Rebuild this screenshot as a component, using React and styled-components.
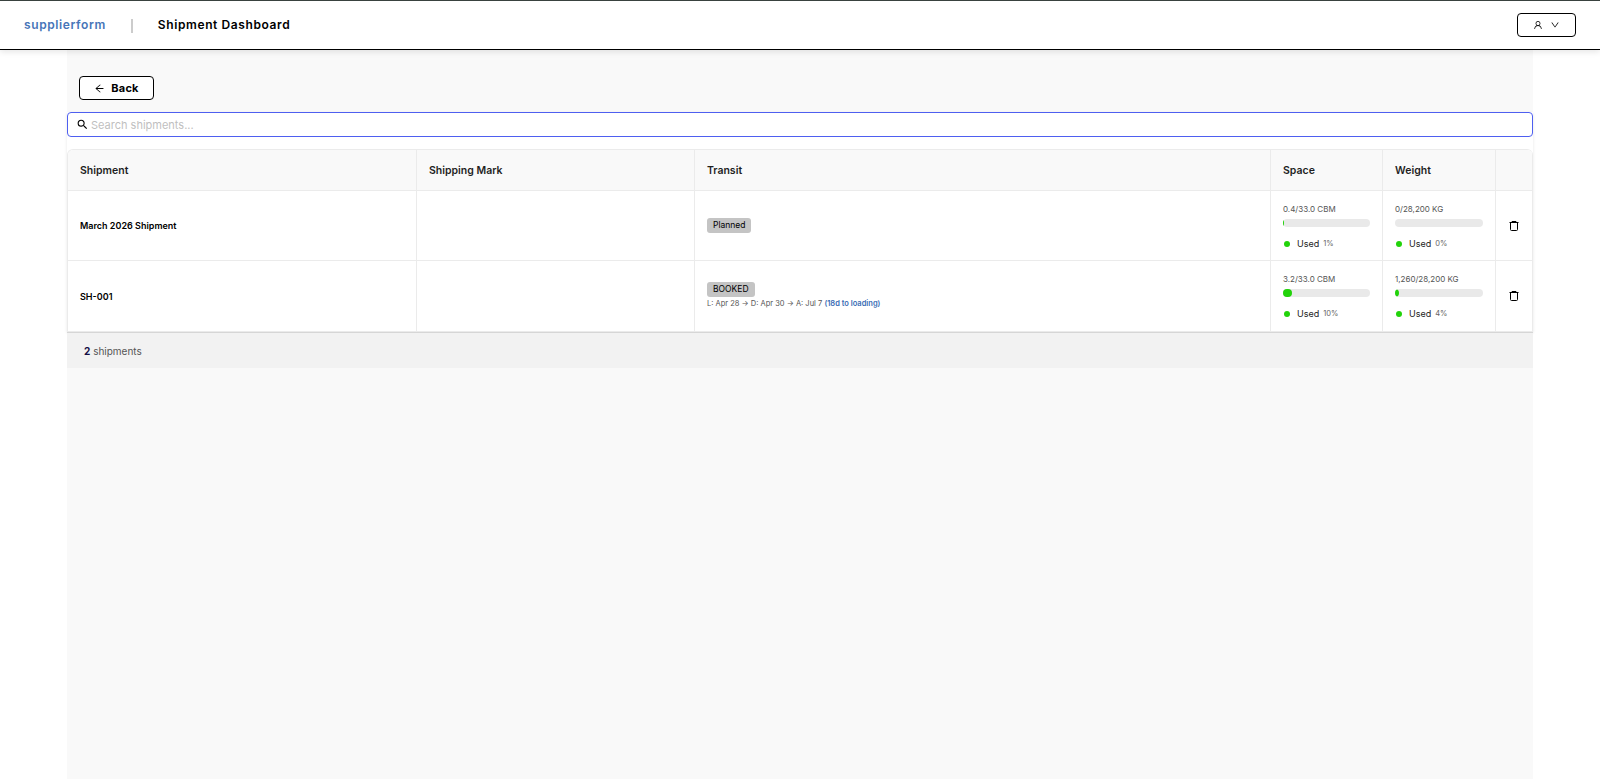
import React from "react";
import styled, { createGlobalStyle } from "styled-components";
import { AiOutlineArrowLeft, AiOutlineDown, AiOutlineUser } from "react-icons/ai";
import { MdSearch } from "react-icons/md";

const GlobalStyle = createGlobalStyle`
	* {
		box-sizing: border-box;
	}

	body {
		margin: 0;
		background: #fff;
		color: #000;
		font-family: Inter, sans-serif;
		font-size: 10px;
		overflow: hidden;
	}
`;

const Page = styled.div`
	display: flex;
	flex-direction: column;
	height: 100vh;
`;

const Header = styled.header`
	position: relative;
	flex: none;
	display: flex;
	align-items: center;
	height: 50px;
	padding: 0 24px;
	border-top: 1px solid #39423f;
	border-bottom: 1px solid #000;
	box-shadow: 0 2px 6px rgba(0, 0, 0, 0.1);
	background: #fff;
	font-size: 12px;
	font-weight: 600;
	line-height: 16px;
`;

const Brand = styled.span`
	color: #4775b8;
	letter-spacing: 0.6px;
`;

const Divider = styled.span`
	width: 2px;
	height: 14px;
	margin: 1px 25px 0 25px;
	background: #ccc;
`;

const Title = styled.h1`
	margin: 0;
	font: inherit;
	letter-spacing: 0.6px;
`;

const Button = styled.button`
	display: flex;
	align-items: center;
	justify-content: center;
	gap: ${({ $gap }) => $gap}px;
	width: ${({ $width }) => $width}px;
	height: 24px;
	padding: 0;
	border: 1px solid #000;
	border-radius: 4px;
	background: #fff;
	color: #000;
	font-family: inherit;
	font-size: 11px;
	font-weight: 700;
	letter-spacing: 0.2px;
`;

const UserButton = styled(Button)`
	margin-left: auto;
	height: 24px;
`;

const Main = styled.main`
	flex: 1;
	width: 1466px;
	margin: 0 auto;
	background: #f9f9f9;
`;

const Toolbar = styled.div`
	display: flex;
	padding: 26px 12px 12px;
`;

const Panel = styled.section`
	background: #fff;
	box-shadow: 0 1px 3px rgba(0, 0, 0, 0.1);
`;

const SearchBox = styled.label`
	display: flex;
	align-items: center;
	gap: 2px;
	height: 25px;
	margin-bottom: 12px;
	padding: 0 8px;
	border: 1px solid #4e5ff0;
	border-radius: 4px;
	background: #fff;
`;

const SearchInput = styled.input`
	flex: 1;
	padding: 0;
	border: 0;
	outline: 0;
	background: none;
	font-family: inherit;
	font-size: 11px;

	&::placeholder {
		color: #bfbfbf;
	}
`;

const Table = styled.div`
	border: 1px solid #ebebeb;
	border-right: 0;
	border-bottom: 0;
	border-radius: 6px 6px 0 0;
	overflow: hidden;
`;

const Row = styled.div`
	display: grid;
	grid-template-columns: 349px 278px 576px 112px 113px 37px;
	height: ${({ $height }) => $height}px;
`;

const Cell = styled.div`
	display: flex;
	flex-direction: column;
	justify-content: center;
	align-items: flex-start;
	padding: 0 12px;
	border-right: 1px solid #ebebeb;
	border-bottom: 1px solid #ebebeb;
`;

const HeadCell = styled(Cell)`
	background: #f9f9f9;
	color: #1f1f1f;
	font-size: 10.5px;
	font-weight: 600;
`;

const Name = styled.span`
	font-size: 9px;
	font-weight: 600;
`;

const Tag = styled.span`
	height: 15px;
	padding: 0 6px;
	border-radius: 3px;
	background: #c4c4c4;
	font-size: 8.5px;
	line-height: 14px;
`;

const Dates = styled.span`
	margin-top: 1px;
	color: #555;
	font-size: 7.5px;
	line-height: 12px;
	white-space: nowrap;

	b {
		color: #3a6db5;
		font-weight: 600;
	}
`;

const UsageCell = styled(Cell)`
	justify-content: flex-start;
	align-items: stretch;
	padding-top: 12px;
`;

const Amount = styled.span`
	color: #555;
	font-size: 8px;
	line-height: 12px;
	white-space: nowrap;
`;

const Track = styled.div`
	flex: none;
	height: 8px;
	margin-top: 4px;
	border-radius: 4px;
	background: #e9e9e9;
	overflow: hidden;
`;

const Fill = styled.div`
	height: 8px;
	border-radius: 0 4px 4px 0;
	background: #22d30a;
`;

const Legend = styled.div`
	display: flex;
	align-items: center;
	margin-top: 9px;
	padding-left: 1px;
	color: #222;
	font-size: 9px;
	line-height: 13px;

	small {
		margin: 1px 0 0 4px;
		color: #666;
		font-size: 7.5px;
	}
`;

const Dot = styled.i`
	width: 6px;
	height: 6px;
	margin: 2px 7px 0 0;
	border-radius: 50%;
	background: #22d30a;
`;

const ActionCell = styled(Cell)`
	align-items: center;
	padding: 0;
`;

const Footer = styled.footer`
	height: 36px;
	padding: 0 17px;
	border-top: 1px solid #d6d6d6;
	background: #f2f2f2;
	color: #555;
	font-size: 10px;
	line-height: 36px;

	b {
		color: #150f45;
	}
`;

const TrashIcon = () => (
	<svg width="10" height="12" viewBox="0 0 10 12" fill="none" stroke="#000">
		<path d="M0.5 2.5H9.5M3 2V1.5H7V2M1.5 3V9.5Q1.5 10.5 2.5 10.5H7.5Q8.5 10.5 8.5 9.5V3" />
	</svg>
);

const Usage = ({ amount, percent, fill }) => (
	<UsageCell>
		<Amount>{amount}</Amount>
		<Track>
			<Fill style={{ width: `${fill}%` }} />
		</Track>
		<Legend>
			<Dot />
			Used <small>{percent}%</small>
		</Legend>
	</UsageCell>
);

const columns = ["Shipment", "Shipping Mark", "Transit", "Space", "Weight", ""];

const shipments = [
	{
		name: "March 2026 Shipment",
		status: "Planned",
		space: { amount: "0.4/33.0 CBM", percent: 1, fill: 1.2 },
		weight: { amount: "0/28,200 KG", percent: 0, fill: 0 },
		height: 70,
	},
	{
		name: "SH-001",
		status: "BOOKED",
		dates: "L: Apr 28 → D: Apr 30 → A: Jul 7",
		note: "(18d to loading)",
		space: { amount: "3.2/33.0 CBM", percent: 10, fill: 10 },
		weight: { amount: "1,260/28,200 KG", percent: 4, fill: 4.5 },
		height: 71,
	},
];

const App = () => (
	<Page>
		<GlobalStyle />
		<Header>
			<Brand>supplierform</Brand>
			<Divider />
			<Title>Shipment Dashboard</Title>
			<UserButton $width={59} $gap={7}>
				<AiOutlineUser size={10} />
				<AiOutlineDown size={10} />
			</UserButton>
		</Header>
		<Main>
			<Toolbar>
				<Button $width={75} $gap={6}>
					<AiOutlineArrowLeft size={11} />
					Back
				</Button>
			</Toolbar>
			<Panel>
				<SearchBox>
					<MdSearch size={13} />
					<SearchInput placeholder="Search shipments..." />
				</SearchBox>
				<Table>
					<Row $height={41}>
						{columns.map((label) => (
							<HeadCell key={label}>{label}</HeadCell>
						))}
					</Row>
					{shipments.map((item) => (
						<Row key={item.name} $height={item.height}>
							<Cell>
								<Name>{item.name}</Name>
							</Cell>
							<Cell />
							<Cell>
								<Tag>{item.status}</Tag>
								{item.dates && (
									<Dates>
										{item.dates} <b>{item.note}</b>
									</Dates>
								)}
							</Cell>
							<Usage {...item.space} />
							<Usage {...item.weight} />
							<ActionCell>
								<TrashIcon />
							</ActionCell>
						</Row>
					))}
				</Table>
			</Panel>
			<Footer>
				<b>2</b> shipments
			</Footer>
		</Main>
	</Page>
);

export default App;
